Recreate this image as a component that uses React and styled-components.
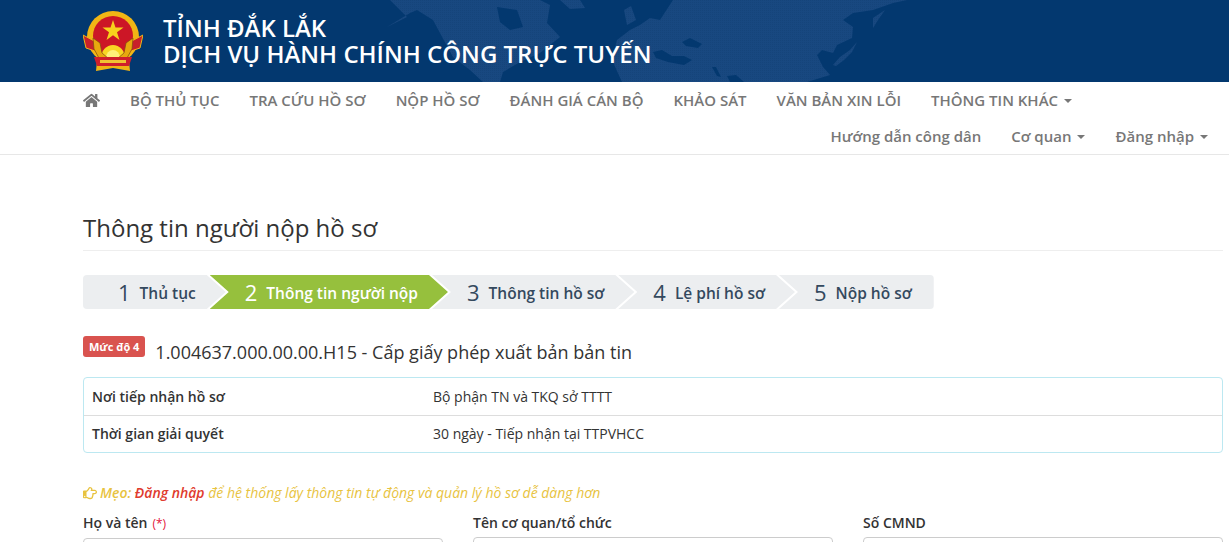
import React from 'react';
import styled, { createGlobalStyle } from 'styled-components';
import { FaHome, FaRegHandPointRight } from 'react-icons/fa';

const GlobalStyle = createGlobalStyle`
  html, body {
    margin: 0;
    height: 100%;
    overflow: hidden;
    background: #fff;
  }
  body {
    font-family: "Open Sans", "Noto Sans", sans-serif;
    font-size: 14px;
    color: #333;
  }
  * {
    box-sizing: border-box;
  }
`;

const Header = styled.header`
  position: relative;
  height: 82px;
  background: #03386f;
  overflow: hidden;
  display: flex;
  align-items: center;
  gap: 20px;
  padding-left: 83px;
`;

const MapArt = styled.svg`
  position: absolute;
  left: 0;
  top: 0;
  width: 1229px;
  height: 82px;
`;

const Emblem = styled.svg`
  position: relative;
  width: 60px;
  height: 60px;
  flex: none;
`;

const SiteTitle = styled.h1`
  position: relative;
  margin: 0;
  color: #fff;
  font-size: 24px;
  font-weight: 600;
  line-height: 26px;
`;

const NavBar = styled.nav`
  height: 73px;
  border-bottom: 1px solid #e7e7e7;
  padding: 0 6px 0 68px;
`;

const NavRow = styled.div`
  display: flex;
  height: 36px;
  justify-content: ${(p) => (p.$right ? 'flex-end' : 'flex-start')};
`;

const NavItem = styled.a`
  display: flex;
  align-items: center;
  padding: 0 15px;
  color: #777;
  font-size: 15px;
  font-weight: 600;
  white-space: nowrap;
  text-transform: ${(p) => (p.$upper ? 'uppercase' : 'none')};

  svg {
    font-size: 17px;
  }
`;

const Caret = styled.span`
  width: 0;
  height: 0;
  margin-left: 6px;
  margin-top: 2px;
  border-top: 4px solid #777;
  border-left: 4px solid transparent;
  border-right: 4px solid transparent;
`;

const Main = styled.main`
  padding: 0 6px 0 83px;
`;

const PageTitle = styled.h2`
  margin: 53px 0 24px;
  padding-bottom: 4px;
  height: 43px;
  display: flex;
  align-items: center;
  border-bottom: 1px solid #eee;
  font-size: 24px;
  font-weight: 400;
  color: #333;
`;

const Steps = styled.ol`
  display: flex;
  margin: 0 0 27px;
  padding: 0;
  list-style: none;
`;

const Step = styled.li`
  display: flex;
  align-items: center;
  gap: 9px;
  height: 34px;
  margin-left: ${(p) => (p.$first ? '0' : '-16px')};
  padding: 0 ${(p) => (p.$last ? '22px' : '30px')} 0 35px;
  background: ${(p) => (p.$active ? '#96c03d' : '#eceef0')};
  color: ${(p) => (p.$active ? '#fff' : '#34495e')};
  border-radius: ${(p) => (p.$first ? '4px 0 0 4px' : p.$last ? '0 4px 4px 0' : '0')};
  clip-path: ${(p) =>
    p.$first
      ? 'polygon(0 0, calc(100% - 19px) 0, 100% 50%, calc(100% - 19px) 100%, 0 100%)'
      : p.$last
        ? 'polygon(0 0, 100% 0, 100% 100%, 0 100%, 19px 50%)'
        : 'polygon(0 0, calc(100% - 19px) 0, 100% 50%, calc(100% - 19px) 100%, 0 100%, 19px 50%)'};
`;

const StepNumber = styled.span`
  font-size: 22px;
  font-weight: 400;
  line-height: 1;
`;

const StepLabel = styled.span`
  padding-top: 1px;
  font-size: 15.5px;
  font-weight: 600;
  white-space: nowrap;
`;

const ServiceLine = styled.div`
  display: flex;
  gap: 10px;
  margin-bottom: 13px;
`;

const LevelBadge = styled.span`
  height: 21px;
  padding: 0 6px;
  display: flex;
  align-items: center;
  border-radius: 3px;
  background: #d9534f;
  color: #fff;
  font-size: 11px;
  font-weight: 700;
  white-space: nowrap;
`;

const ServiceName = styled.h3`
  margin: 5px 0 0;
  font-size: 18px;
  line-height: 23px;
  font-weight: 400;
  color: #333;
`;

const InfoTable = styled.div`
  border: 1px solid #bce8f1;
  border-radius: 4px;
  margin-bottom: 30px;
`;

const InfoRow = styled.div`
  display: grid;
  grid-template-columns: 341px 1fr;
  height: 37px;
  align-items: center;
  padding-left: 8px;
  padding-bottom: ${(p) => (p.$first ? '0' : '1px')};
  border-top: ${(p) => (p.$first ? '0' : '1px solid #ddd')};
`;

const InfoLabel = styled.span`
  font-weight: 600;
`;

const InfoValue = styled.span`
  color: #333;
`;

const Tip = styled.p`
  display: flex;
  align-items: center;
  gap: 3px;
  margin: 0 0 10px;
  color: #e8c33f;
  font-size: 14px;
  line-height: 20px;
  font-style: italic;

  b {
    color: #e03b2e;
    font-weight: 600;
  }

  strong {
    font-weight: 600;
  }
`;

const FormGrid = styled.div`
  display: grid;
  grid-template-columns: repeat(3, 360px);
  gap: 30px;
`;

const Field = styled.div`
  display: flex;
  flex-direction: column;
  gap: 4px;
`;

const FieldLabel = styled.label`
  font-weight: 600;
  line-height: 20px;
`;

const Required = styled.span`
  color: #e3153a;
  font-size: 12px;
  font-weight: 400;
  margin-left: 5px;
`;

const FieldInput = styled.input`
  height: 34px;
  border: 1px solid #ccc;
  border-radius: 4px;
  background: #fff;
`;

const navTop = ['Bộ thủ tục', 'Tra cứu hồ sơ', 'Nộp hồ sơ', 'Đánh giá cán bộ', 'Khảo sát', 'Văn bản xin lỗi'];
const steps = ['Thủ tục', 'Thông tin người nộp', 'Thông tin hồ sơ', 'Lệ phí hồ sơ', 'Nộp hồ sơ'];

// rough world map, land in a lighter blue with a fine dot screen, seas cut back over it
const WorldMap = () => (
  <MapArt viewBox="0 0 1229 82" aria-hidden="true">
    <defs>
      <pattern id="dots" width="2" height="2" patternUnits="userSpaceOnUse">
        <rect width="2" height="2" fill="#184880" />
        <rect width="1" height="1" fill="#15447a" />
      </pattern>
    </defs>
    <g fill="url(#dots)">
      <path d="M390 0L407 17 387 27 410 13 417 10 433 20 440 33 453 57 470 70 483 82H500L503 72 520 62 540 53 560 37 547 23 550 5 540 0Z" />
      <path d="M560 0H580L585 8 570 9Z" />
      <path d="M622 82L612 60 617 40 630 30 640 25 650 18 660 20 673 0H907L893 3 873 10 853 13 843 20 853 27 852 38 837 45 833 53 822 50 817 55 823 67 830 75 807 82Z" />
      <path d="M833 65L840 57 850 50 857 42 852 52 844 60 836 66Z" />
      <path d="M873 28V18L885 10 878 20Z" />
      <path d="M624 10L631 6 636 20 627 25Z" />
    </g>
    <g fill="#03386f">
      <path d="M497 7L517 10 523 27 510 30 500 22Z" />
      <path d="M682 42L690 38 702 44 698 48 686 46Z" />
      <path d="M653 52L662 50 672 56 684 56 692 60 684 65 668 62 656 58Z" />
      <path d="M712 67L716 67 721 77 717 76Z" />
      <path d="M727 76L736 75 744 82H730Z" />
    </g>
  </MapArt>
);

const StateEmblem = () => (
  <Emblem viewBox="0 0 60 60" aria-hidden="true">
    <path d="M14 50H46L47 60 30 57 13 60Z" fill="#f0b414" />
    <circle cx="30" cy="26" r="26" fill="#f1b615" />
    <circle cx="30" cy="25" r="20" fill="#cc1626" />
    <path d="M30 9L32.5 16.6 40.5 16.6 34 21.3 36.5 29 30 24.2 23.5 29 26 21.3 19.5 16.6 27.5 16.6Z" fill="#f7d21c" />
    <path d="M0 24L13 31 17 42 12 40 3 37Z" fill="#c8202a" stroke="#f1b615" strokeWidth="1" />
    <path d="M60 24L47 31 43 42 48 40 57 37Z" fill="#c8202a" stroke="#f1b615" strokeWidth="1" />
    <path d="M18 47A12 13 0 0 1 42 47Z" fill="#f8d523" />
    <path d="M23 47A7 8 0 0 1 37 47Z" fill="#fff07a" />
    <path d="M10 27L17 32 19 42 26 48 16 47 11 38Z" fill="#e8a80e" stroke="#7d4a12" strokeWidth="0.7" />
    <path d="M50 27L43 32 41 42 34 48 44 47 49 38Z" fill="#e8a80e" stroke="#7d4a12" strokeWidth="0.7" />
    <path d="M11 46H49L46 55H14Z" fill="#cf1f2b" />
    <path d="M17 49H43V52H17Z" fill="#f1c232" />
  </Emblem>
);

export default function App() {
  return (
    <>
      <GlobalStyle />
      <Header>
        <WorldMap />
        <StateEmblem />
        <SiteTitle>
          TỈNH ĐẮK LẮK
          <br />
          DỊCH VỤ HÀNH CHÍNH CÔNG TRỰC TUYẾN
        </SiteTitle>
      </Header>
      <NavBar>
        <NavRow>
          <NavItem><FaHome /></NavItem>
          {navTop.map((item) => (
            <NavItem key={item} $upper>{item}</NavItem>
          ))}
          <NavItem $upper>Thông tin khác<Caret /></NavItem>
        </NavRow>
        <NavRow $right>
          <NavItem>Hướng dẫn công dân</NavItem>
          <NavItem>Cơ quan<Caret /></NavItem>
          <NavItem>Đăng nhập<Caret /></NavItem>
        </NavRow>
      </NavBar>
      <Main>
        <PageTitle>Thông tin người nộp hồ sơ</PageTitle>
        <Steps>
          {steps.map((label, i) => (
            <Step key={label} $first={i === 0} $last={i === steps.length - 1} $active={i === 1}>
              <StepNumber>{i + 1}</StepNumber>
              <StepLabel>{label}</StepLabel>
            </Step>
          ))}
        </Steps>
        <ServiceLine>
          <LevelBadge>Mức độ 4</LevelBadge>
          <ServiceName>1.004637.000.00.00.H15 - Cấp giấy phép xuất bản bản tin</ServiceName>
        </ServiceLine>
        <InfoTable>
          <InfoRow $first>
            <InfoLabel>Nơi tiếp nhận hồ sơ</InfoLabel>
            <InfoValue>Bộ phận TN và TKQ sở TTTT</InfoValue>
          </InfoRow>
          <InfoRow>
            <InfoLabel>Thời gian giải quyết</InfoLabel>
            <InfoValue>30 ngày - Tiếp nhận tại TTPVHCC</InfoValue>
          </InfoRow>
        </InfoTable>
        <Tip>
          <FaRegHandPointRight />
          <span><strong>Mẹo:</strong> <b>Đăng nhập</b> để hệ thống lấy thông tin tự động và quản lý hồ sơ dễ dàng hơn</span>
        </Tip>
        <FormGrid>
          <Field>
            <FieldLabel>Họ và tên<Required>(*)</Required></FieldLabel>
            <FieldInput />
          </Field>
          <Field>
            <FieldLabel>Tên cơ quan/tổ chức</FieldLabel>
            <FieldInput />
          </Field>
          <Field>
            <FieldLabel>Số CMND</FieldLabel>
            <FieldInput />
          </Field>
        </FormGrid>
      </Main>
    </>
  );
}
